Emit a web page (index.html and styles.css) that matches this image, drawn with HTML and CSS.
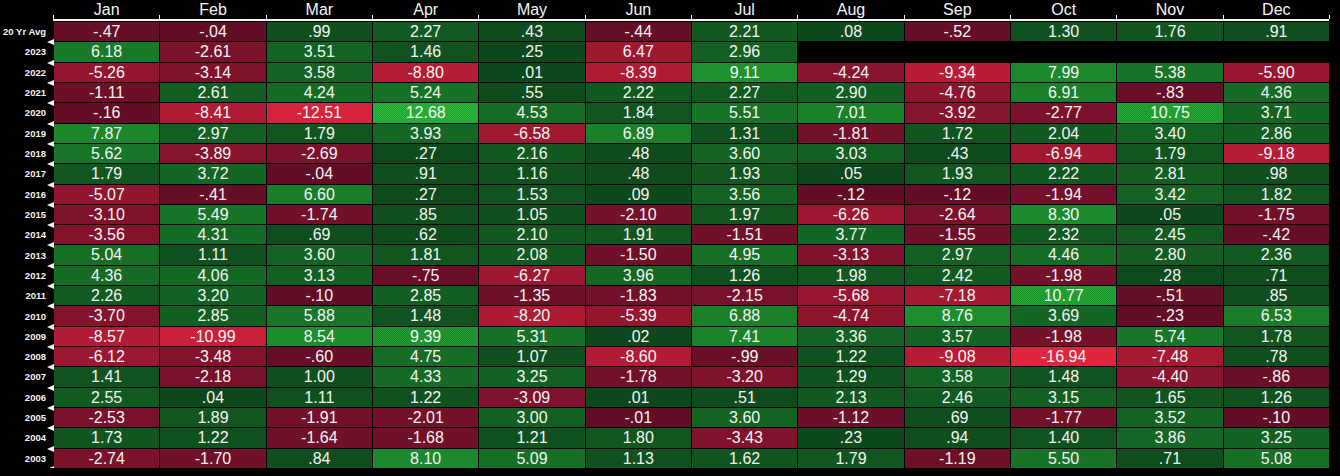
FILE: index.html
```html
<!DOCTYPE html>
<html lang="en">
<head>
<meta charset="utf-8">
<title>Seasonality</title>
<link rel="stylesheet" href="styles.css">
</head>
<body>
<main class="board">
  <div class="corner"></div>
  <div class="months">
    <div class="m">Jan</div><div class="m">Feb</div><div class="m">Mar</div><div class="m">Apr</div><div class="m">May</div><div class="m">Jun</div><div class="m">Jul</div><div class="m">Aug</div><div class="m">Sep</div><div class="m">Oct</div><div class="m">Nov</div><div class="m">Dec</div>
  </div>

  <div class="lbl">20 Yr Avg</div><div class="c">-.47</div><div class="c">-.04</div><div class="c">.99</div><div class="c">2.27</div><div class="c">.43</div><div class="c">-.44</div><div class="c">2.21</div><div class="c">.08</div><div class="c">-.52</div><div class="c">1.30</div><div class="c">1.76</div><div class="c">.91</div>
  <div class="lbl">2023</div><div class="c">6.18</div><div class="c">-2.61</div><div class="c">3.51</div><div class="c">1.46</div><div class="c">.25</div><div class="c flip">6.47</div><div class="c">2.96</div>
  <div class="lbl">2022</div><div class="c">-5.26</div><div class="c">-3.14</div><div class="c">3.58</div><div class="c">-8.80</div><div class="c">.01</div><div class="c">-8.39</div><div class="c">9.11</div><div class="c">-4.24</div><div class="c">-9.34</div><div class="c">7.99</div><div class="c">5.38</div><div class="c">-5.90</div>
  <div class="lbl">2021</div><div class="c">-1.11</div><div class="c">2.61</div><div class="c">4.24</div><div class="c">5.24</div><div class="c">.55</div><div class="c">2.22</div><div class="c">2.27</div><div class="c">2.90</div><div class="c">-4.76</div><div class="c">6.91</div><div class="c">-.83</div><div class="c">4.36</div>
  <div class="lbl">2020</div><div class="c">-.16</div><div class="c">-8.41</div><div class="c">-12.51</div><div class="c">12.68</div><div class="c">4.53</div><div class="c">1.84</div><div class="c">5.51</div><div class="c">7.01</div><div class="c">-3.92</div><div class="c">-2.77</div><div class="c">10.75</div><div class="c">3.71</div>
  <div class="lbl">2019</div><div class="c">7.87</div><div class="c">2.97</div><div class="c">1.79</div><div class="c">3.93</div><div class="c">-6.58</div><div class="c">6.89</div><div class="c">1.31</div><div class="c">-1.81</div><div class="c">1.72</div><div class="c">2.04</div><div class="c">3.40</div><div class="c">2.86</div>
  <div class="lbl">2018</div><div class="c">5.62</div><div class="c">-3.89</div><div class="c">-2.69</div><div class="c">.27</div><div class="c">2.16</div><div class="c">.48</div><div class="c">3.60</div><div class="c">3.03</div><div class="c">.43</div><div class="c">-6.94</div><div class="c">1.79</div><div class="c">-9.18</div>
  <div class="lbl">2017</div><div class="c">1.79</div><div class="c">3.72</div><div class="c">-.04</div><div class="c">.91</div><div class="c">1.16</div><div class="c">.48</div><div class="c">1.93</div><div class="c">.05</div><div class="c">1.93</div><div class="c">2.22</div><div class="c">2.81</div><div class="c">.98</div>
  <div class="lbl">2016</div><div class="c">-5.07</div><div class="c">-.41</div><div class="c">6.60</div><div class="c">.27</div><div class="c">1.53</div><div class="c">.09</div><div class="c">3.56</div><div class="c">-.12</div><div class="c">-.12</div><div class="c">-1.94</div><div class="c">3.42</div><div class="c">1.82</div>
  <div class="lbl">2015</div><div class="c">-3.10</div><div class="c">5.49</div><div class="c">-1.74</div><div class="c">.85</div><div class="c">1.05</div><div class="c">-2.10</div><div class="c">1.97</div><div class="c">-6.26</div><div class="c">-2.64</div><div class="c">8.30</div><div class="c">.05</div><div class="c">-1.75</div>
  <div class="lbl">2014</div><div class="c">-3.56</div><div class="c">4.31</div><div class="c">.69</div><div class="c">.62</div><div class="c">2.10</div><div class="c">1.91</div><div class="c">-1.51</div><div class="c">3.77</div><div class="c">-1.55</div><div class="c">2.32</div><div class="c">2.45</div><div class="c">-.42</div>
  <div class="lbl">2013</div><div class="c">5.04</div><div class="c">1.11</div><div class="c">3.60</div><div class="c">1.81</div><div class="c">2.08</div><div class="c">-1.50</div><div class="c">4.95</div><div class="c">-3.13</div><div class="c">2.97</div><div class="c">4.46</div><div class="c">2.80</div><div class="c">2.36</div>
  <div class="lbl">2012</div><div class="c">4.36</div><div class="c">4.06</div><div class="c">3.13</div><div class="c">-.75</div><div class="c">-6.27</div><div class="c">3.96</div><div class="c">1.26</div><div class="c">1.98</div><div class="c">2.42</div><div class="c">-1.98</div><div class="c">.28</div><div class="c">.71</div>
  <div class="lbl">2011</div><div class="c">2.26</div><div class="c">3.20</div><div class="c">-.10</div><div class="c">2.85</div><div class="c">-1.35</div><div class="c">-1.83</div><div class="c">-2.15</div><div class="c">-5.68</div><div class="c">-7.18</div><div class="c">10.77</div><div class="c">-.51</div><div class="c">.85</div>
  <div class="lbl">2010</div><div class="c">-3.70</div><div class="c">2.85</div><div class="c">5.88</div><div class="c">1.48</div><div class="c">-8.20</div><div class="c">-5.39</div><div class="c">6.88</div><div class="c">-4.74</div><div class="c">8.76</div><div class="c">3.69</div><div class="c">-.23</div><div class="c">6.53</div>
  <div class="lbl">2009</div><div class="c">-8.57</div><div class="c">-10.99</div><div class="c">8.54</div><div class="c">9.39</div><div class="c">5.31</div><div class="c">.02</div><div class="c">7.41</div><div class="c">3.36</div><div class="c">3.57</div><div class="c">-1.98</div><div class="c">5.74</div><div class="c">1.78</div>
  <div class="lbl">2008</div><div class="c">-6.12</div><div class="c">-3.48</div><div class="c">-.60</div><div class="c">4.75</div><div class="c">1.07</div><div class="c">-8.60</div><div class="c">-.99</div><div class="c">1.22</div><div class="c">-9.08</div><div class="c">-16.94</div><div class="c">-7.48</div><div class="c">.78</div>
  <div class="lbl">2007</div><div class="c">1.41</div><div class="c">-2.18</div><div class="c">1.00</div><div class="c">4.33</div><div class="c">3.25</div><div class="c">-1.78</div><div class="c">-3.20</div><div class="c">1.29</div><div class="c">3.58</div><div class="c">1.48</div><div class="c">-4.40</div><div class="c">-.86</div>
  <div class="lbl">2006</div><div class="c">2.55</div><div class="c">.04</div><div class="c">1.11</div><div class="c">1.22</div><div class="c">-3.09</div><div class="c">.01</div><div class="c">.51</div><div class="c">2.13</div><div class="c">2.46</div><div class="c">3.15</div><div class="c">1.65</div><div class="c">1.26</div>
  <div class="lbl">2005</div><div class="c">-2.53</div><div class="c">1.89</div><div class="c">-1.91</div><div class="c">-2.01</div><div class="c">3.00</div><div class="c">-.01</div><div class="c">3.60</div><div class="c">-1.12</div><div class="c">.69</div><div class="c">-1.77</div><div class="c">3.52</div><div class="c">-.10</div>
  <div class="lbl">2004</div><div class="c">1.73</div><div class="c">1.22</div><div class="c">-1.64</div><div class="c">-1.68</div><div class="c">1.21</div><div class="c">1.80</div><div class="c">-3.43</div><div class="c">.23</div><div class="c">.94</div><div class="c">1.40</div><div class="c">3.86</div><div class="c">3.25</div>
  <div class="lbl">2003</div><div class="c">-2.74</div><div class="c">-1.70</div><div class="c">.84</div><div class="c">8.10</div><div class="c">5.09</div><div class="c">1.13</div><div class="c">1.62</div><div class="c">1.79</div><div class="c">-1.19</div><div class="c">5.50</div><div class="c">.71</div><div class="c">5.08</div>
</main>
<script src="script.js"></script>
</body>
</html>
```

FILE: styles.css
```css
html, body {
  margin: 0;
  padding: 0;
  background: #000;
  overflow: hidden;
}

.board {
  display: grid;
  width: 1329px;
  grid-template-columns: 53px repeat(12, 1fr);
  grid-template-rows: 21px repeat(22, 19.32px);
  column-gap: 1px;
  row-gap: 1px;
  font-family: "Liberation Sans", Arial, sans-serif;
  color: #f4f4f4;
}

.months {
  grid-column: 2 / -1;
  display: grid;
  grid-template-columns: repeat(12, 1fr);
  column-gap: 1px;
  border-bottom: 2px solid #f2f2f2;
  margin-left: -1px;
  padding-left: 1px;
}

.m {
  position: relative;
  font-size: 16px;
  line-height: 19px;
  text-align: center;
}

.m::before {
  content: "";
  position: absolute;
  left: -1px;
  bottom: 0;
  width: 1px;
  height: 4px;
  background: #f2f2f2;
}

.m:last-child::after {
  content: "";
  position: absolute;
  right: -1px;
  bottom: 0;
  width: 1px;
  height: 4px;
  background: #f2f2f2;
}

.lbl {
  grid-column: 1;
  position: relative;
  font-size: 9.5px;
  font-weight: bold;
  text-align: right;
  padding-right: 7px;
  display: flex;
  align-items: center;
  justify-content: flex-end;
  color: #f4f4f4;
}

.lbl::after {
  content: "";
  position: absolute;
  right: -1px;
  bottom: -4px;
  width: 0;
  height: 0;
  border-top: 3.5px solid transparent;
  border-bottom: 3.5px solid transparent;
  border-right: 7px solid #f4f4f4;
}

.c {
  font-size: 16px;
  line-height: 19.32px;
  text-align: center;
  background-color: #0a4a1a;
  background-image: repeating-conic-gradient(rgba(0, 0, 0, 0.1) 0 25%, rgba(255, 255, 255, 0.03) 0 50%);
  background-size: 2px 2px;
}
```

FILE: script.js
```js
document.querySelectorAll('.c').forEach(function (el) {
  var v = parseFloat(el.textContent);
  if (el.classList.contains('flip')) v = -Math.abs(v);
  var r, g, b, t;
  if (v >= 0) {
    t = Math.min(v / 12.7, 1);
    r = 10 + 25 * t; g = 72 + 110 * t; b = 26 + 26 * t;
  } else {
    t = Math.min(-v / 13.5, 1);
    r = 100 + 135 * t; g = 10 + 24 * t; b = 36 + 26 * t;
  }
  el.style.backgroundColor = 'rgb(' + Math.round(r) + ',' + Math.round(g) + ',' + Math.round(b) + ')';
});
```
